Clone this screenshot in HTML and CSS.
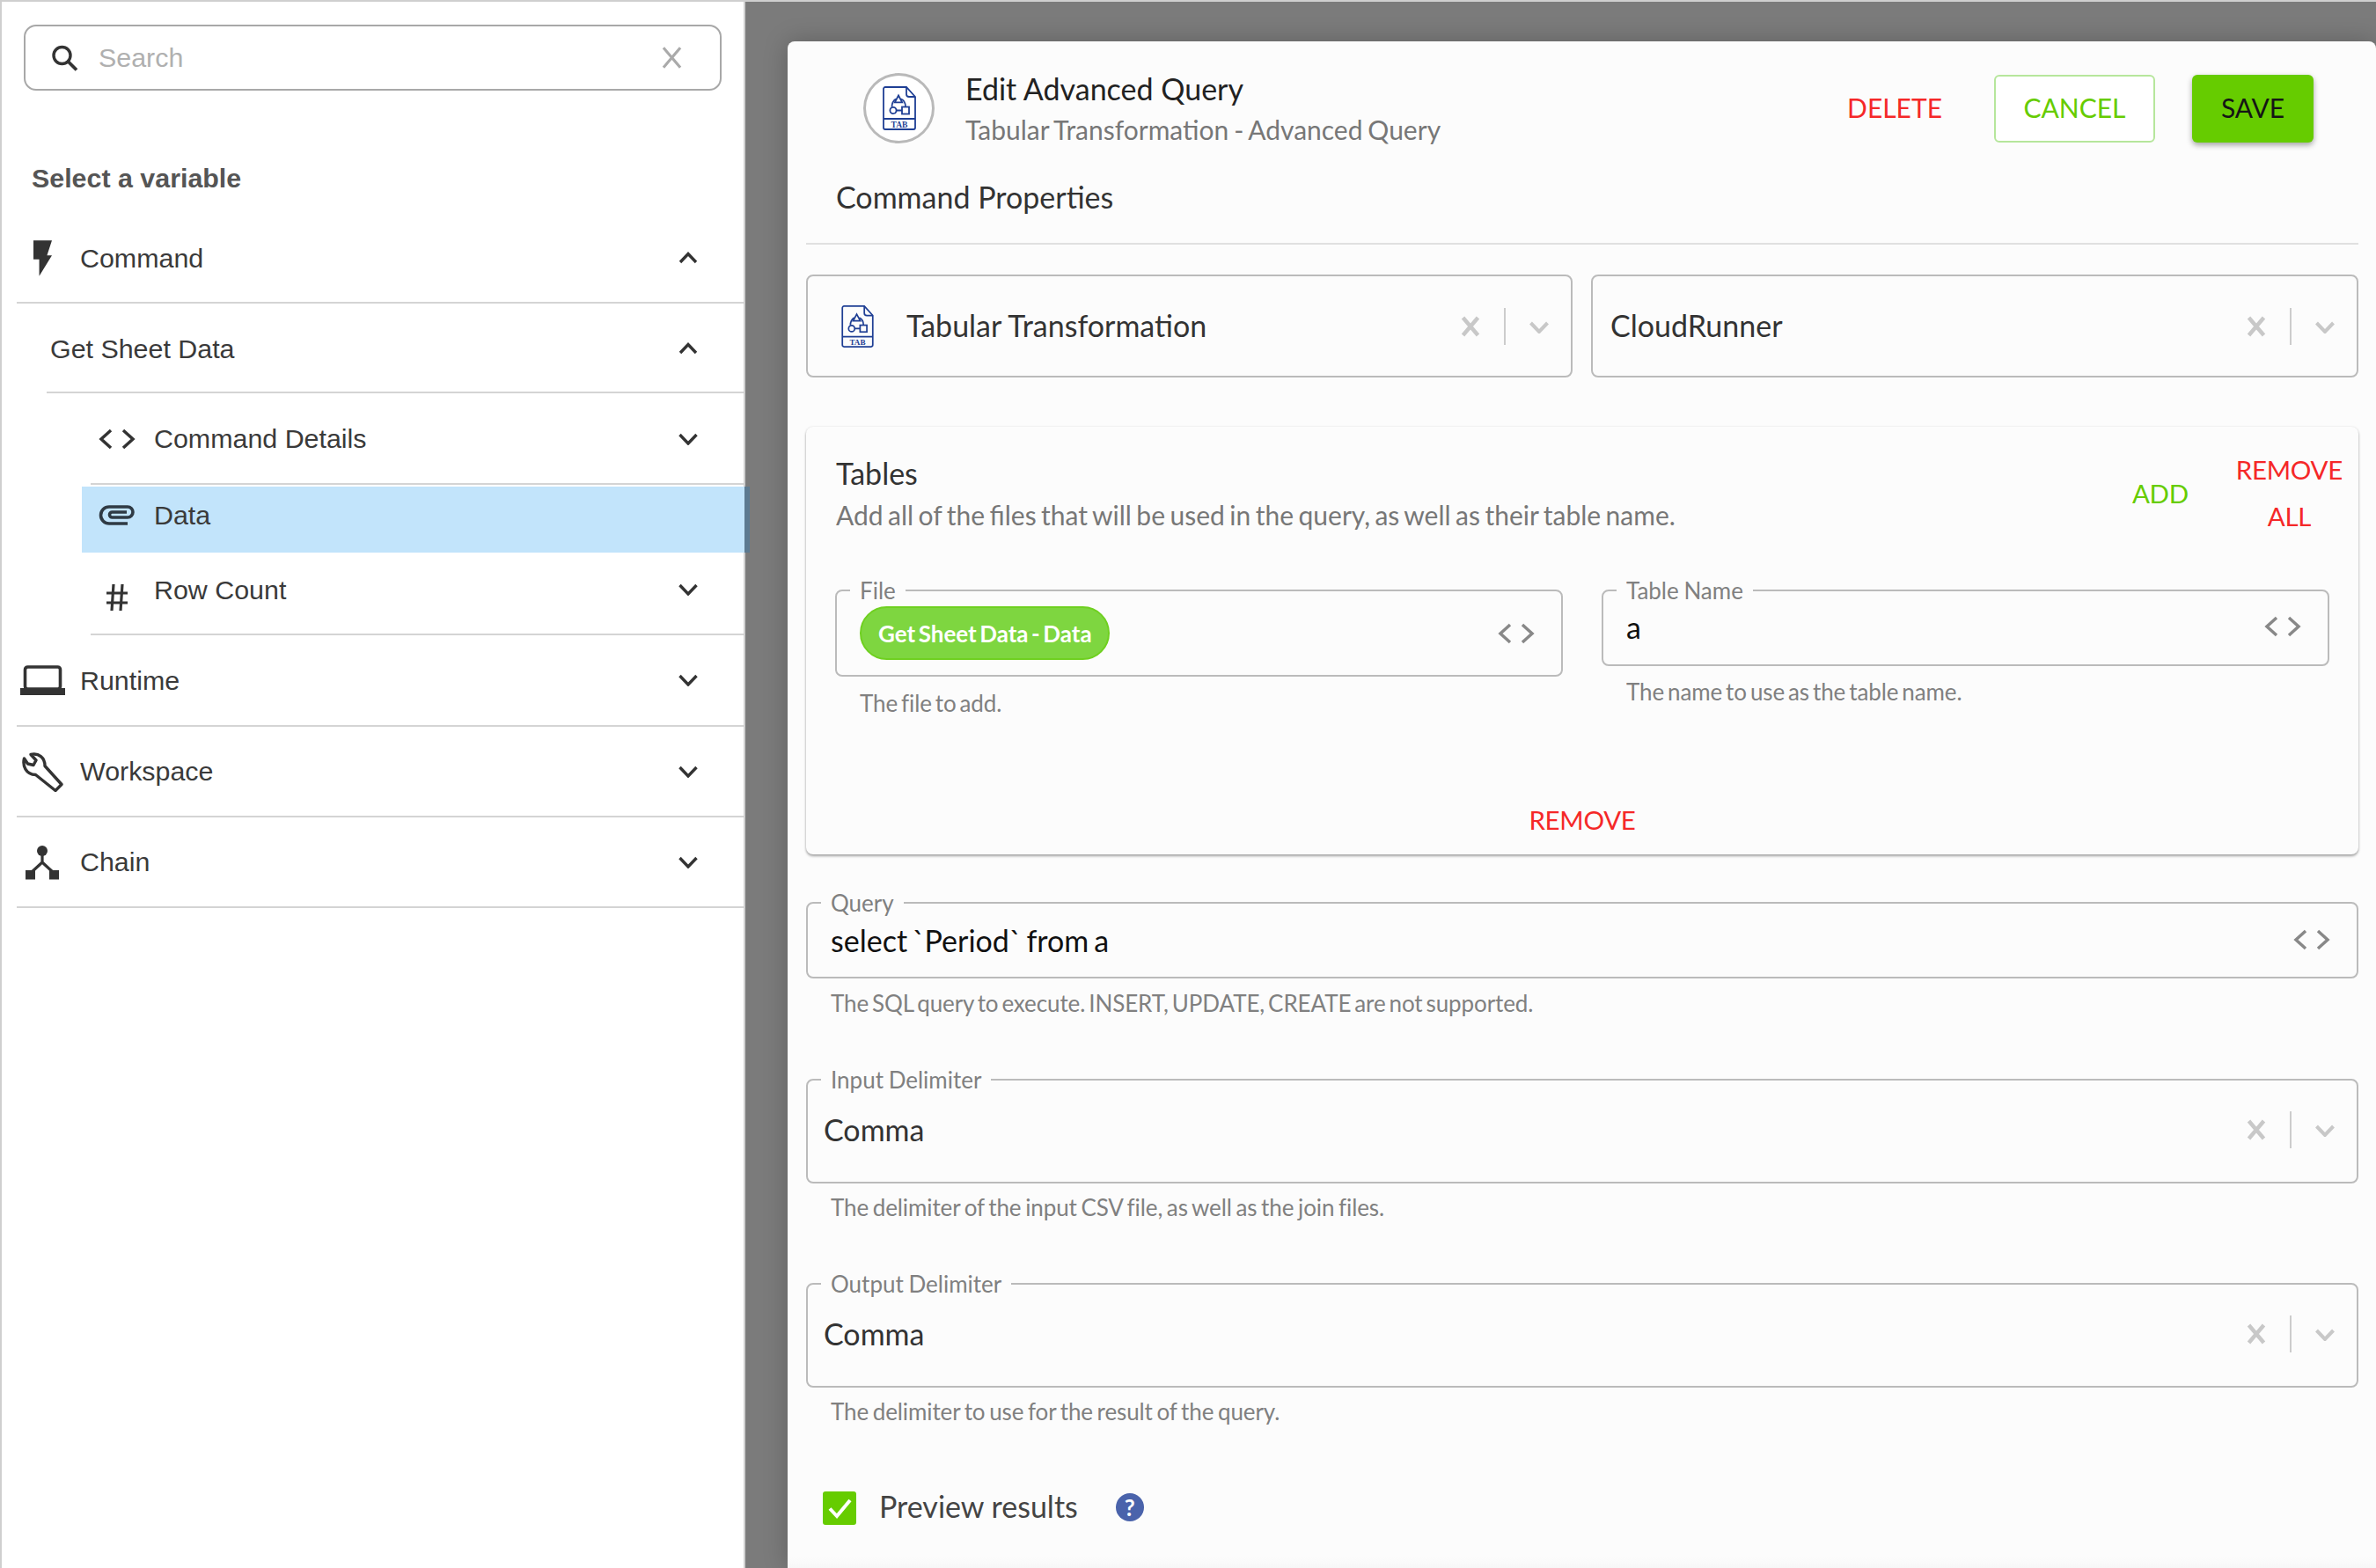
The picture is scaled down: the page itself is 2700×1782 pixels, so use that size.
FILE: index.html
```html
<!DOCTYPE html>
<html lang="en">
<head>
<meta charset="utf-8">
<title>Edit Advanced Query</title>
<link rel="stylesheet" href="styles.css">
</head>
<body>
<svg class="sprite" aria-hidden="true">
  <symbol id="i-code" viewBox="0 0 42 24"><path d="M14 2 3 12l11 10M28 2l11 10-11 10" fill="none" stroke="currentColor"/></symbol>
  <symbol id="i-down" viewBox="0 0 24 14"><path d="M2.500 2l9.500 10L21.500 2" fill="none" stroke="currentColor"/></symbol>
  <symbol id="i-up" viewBox="0 0 24 14"><path d="M3 12 12 2.500 21 12" fill="none" stroke="currentColor"/></symbol>
  <symbol id="i-x" viewBox="0 0 24 24"><path d="M3.500 2 20.500 22M20.500 2 3.500 22" fill="none" stroke="currentColor"/></symbol>
</svg>

<div class="page">
  <aside class="sidebar">
    <div class="search">
      <svg class="search-icon" viewBox="0 0 31 30"><circle cx="12.500" cy="12" r="9.500" fill="none" stroke="#333" stroke-width="3.400"/><path d="M19.500 19 29 28.500" stroke="#333" stroke-width="3.800"/></svg>
      <span class="search-text">Search</span>
      <svg class="search-clear"><use href="#i-x"/></svg>
    </div>
    <h2 class="heading">Select a variable</h2>

    <nav class="nav">
      <div class="row">
        <span class="slot"><svg class="ic-bolt" viewBox="0 0 64 124"><path d="M0 0H64L47 52H64L20 124V66H0z" fill="#333"/></svg></span>
        <span class="label">Command</span>
        <svg class="chev"><use href="#i-up"/></svg>
      </div>
      <div class="sub">
        <div class="row row-plain"><span class="label">Get Sheet Data</span><svg class="chev"><use href="#i-up"/></svg></div>
        <div class="subsub">
          <div class="row row-tall">
            <span class="slot slot-sub"><svg class="ic-code"><use href="#i-code"/></svg></span>
            <span class="label">Command Details</span>
            <svg class="chev"><use href="#i-down"/></svg>
          </div>
          <div class="row row-active">
            <span class="slot slot-sub"><svg class="ic-clip" viewBox="0 0 42 23"><path d="M33 21H12A9.500 9.500 0 0 1 12 2H33A6 6 0 0 1 33 14H15.500A3 3 0 0 1 15.500 8H32" fill="none" stroke="#2f3a44" stroke-width="3.600"/></svg></span>
            <span class="label">Data</span>
          </div>
          <div class="row row-count">
            <span class="slot slot-sub slot-low"><svg class="ic-hash" viewBox="0 0 26 32"><path d="M9 1 7 31M19 1l-2 30M1 11h24M1 22h24" fill="none" stroke="#333" stroke-width="3.200"/></svg></span>
            <span class="label">Row Count</span>
            <svg class="chev"><use href="#i-down"/></svg>
          </div>
        </div>
      </div>
      <div class="row row-mid">
        <span class="slot"><svg class="ic-laptop" viewBox="0 0 51 34"><rect x="5.500" y="2" width="40" height="25" rx="3" fill="none" stroke="#333" stroke-width="3.600"/><rect y="26" width="51" height="8" fill="#333"/></svg></span>
        <span class="label">Runtime</span>
        <svg class="chev"><use href="#i-down"/></svg>
      </div>
      <div class="row row-last">
        <span class="slot"><svg class="ic-wrench" viewBox="0 0 47 46"><path d="M10 3.500 16 10 13 15.500 6.500 14 2.500 8C.5 16 4 26 15.500 26.500L38 44.500 45 37.500 26 16.500C26 7 19 1.500 10 3.500z" fill="none" stroke="#333" stroke-width="3.400" stroke-linejoin="round"/></svg></span>
        <span class="label">Workspace</span>
        <svg class="chev"><use href="#i-down"/></svg>
      </div>
      <div class="row row-last">
        <span class="slot"><svg class="ic-chain" viewBox="0 0 38 40"><circle cx="19" cy="7" r="6" fill="#333"/><path d="M19 7V20L6 32M19 20 32 32" fill="none" stroke="#333" stroke-width="3.200"/><rect y="29" width="11" height="10.500" fill="#333"/><rect x="27" y="29" width="11" height="10.500" fill="#333"/></svg></span>
        <span class="label">Chain</span>
        <svg class="chev"><use href="#i-down"/></svg>
      </div>
    </nav>
  </aside>

  <main class="backdrop">
    <section class="modal">
      <header class="modal-head">
        <div class="circle">
          <svg class="ic-file-lg" viewBox="0 0 38 50">
            <g fill="none" stroke="#1f3f94" stroke-width="1.800">
              <path d="M27 1H3a2 2 0 0 0-2 2v44a2 2 0 0 0 2 2h32a2 2 0 0 0 2-2V12z"/>
              <path d="M27 1v8a3 3 0 0 0 3 3h7M1 37h36"/>
              <path d="M18 10.500l4.200 7.800h-8.400z"/>
              <circle cx="12" cy="27.500" r="3.600"/>
              <rect x="22" y="23.500" width="8" height="8"/>
              <path d="M15.600 27.500H22M10.500 23.500c0-4 1.500-7 4.500-9M21 14.500c3.500 1.500 5 4.500 5 9"/>
            </g>
            <text class="tab-text" x="19" y="46.500" text-anchor="middle">TAB</text>
          </svg>
        </div>
        <div class="titles">
          <h1 class="title">Edit Advanced Query</h1>
          <p class="subtitle">Tabular Transformation - Advanced Query</p>
        </div>
        <div class="actions">
          <span class="btn-delete">DELETE</span>
          <span class="btn-cancel">CANCEL</span>
          <span class="btn-save">SAVE</span>
        </div>
      </header>
      <h2 class="section-title">Command Properties</h2>

      <div class="select-pair">
        <div class="select">
          <svg class="ic-file-sm" viewBox="0 0 38 50">
            <g fill="none" stroke="#1f3f94" stroke-width="1.800">
              <path d="M27 1H3a2 2 0 0 0-2 2v44a2 2 0 0 0 2 2h32a2 2 0 0 0 2-2V12z"/>
              <path d="M27 1v8a3 3 0 0 0 3 3h7M1 37h36"/>
              <path d="M18 10.500l4.200 7.800h-8.400z"/>
              <circle cx="12" cy="27.500" r="3.600"/>
              <rect x="22" y="23.500" width="8" height="8"/>
              <path d="M15.600 27.500H22M10.500 23.500c0-4 1.500-7 4.500-9M21 14.500c3.500 1.500 5 4.500 5 9"/>
            </g>
            <text class="tab-text" x="19" y="46.500" text-anchor="middle">TAB</text>
          </svg>
          <span class="select-value">Tabular Transformation</span>
          <span class="controls"><svg class="ctl-x"><use href="#i-x"/></svg><i class="ctl-sep"></i><svg class="ctl-chev"><use href="#i-down"/></svg></span>
        </div>
        <div class="select select-second">
          <span class="select-value">CloudRunner</span>
          <span class="controls"><svg class="ctl-x"><use href="#i-x"/></svg><i class="ctl-sep"></i><svg class="ctl-chev"><use href="#i-down"/></svg></span>
        </div>
      </div>

      <section class="card">
        <div class="card-head">
          <div class="card-titles">
            <h3 class="card-title">Tables</h3>
            <p class="card-desc">Add all of the files that will be used in the query, as well as their table name.</p>
          </div>
          <span class="link-add">ADD</span>
          <span class="link-remove-all">REMOVE<br>ALL</span>
        </div>
        <div class="card-fields">
          <div>
            <fieldset class="field field-file">
              <legend>File</legend>
              <div class="field-inner inner-file">
                <span class="chip">Get Sheet Data - Data</span>
                <svg class="ic-field-code"><use href="#i-code"/></svg>
              </div>
            </fieldset>
            <p class="help help-tight">The file to add.</p>
          </div>
          <div>
            <fieldset class="field field-name">
              <legend>Table Name</legend>
              <div class="field-inner inner-name">
                <span class="value">a</span>
                <svg class="ic-field-code"><use href="#i-code"/></svg>
              </div>
            </fieldset>
            <p class="help help-tight help-name">The name to use as the table name.</p>
          </div>
        </div>
        <div class="card-foot"><span class="link-remove">REMOVE</span></div>
      </section>

      <fieldset class="field field-query">
        <legend>Query</legend>
        <div class="field-inner inner-query">
          <span class="value">select `Period` from a</span>
          <svg class="ic-field-code"><use href="#i-code"/></svg>
        </div>
      </fieldset>
      <p class="help help-tight help-query">The SQL query to execute. INSERT, UPDATE, CREATE are not supported.</p>

      <fieldset class="field field-delim">
        <legend>Input Delimiter</legend>
        <div class="field-inner inner-delim">
          <span class="select-value">Comma</span>
          <span class="controls"><svg class="ctl-x"><use href="#i-x"/></svg><i class="ctl-sep"></i><svg class="ctl-chev"><use href="#i-down"/></svg></span>
        </div>
      </fieldset>
      <p class="help help-delim">The delimiter of the input CSV file, as well as the join files.</p>

      <fieldset class="field field-delim">
        <legend>Output Delimiter</legend>
        <div class="field-inner inner-delim">
          <span class="select-value">Comma</span>
          <span class="controls"><svg class="ctl-x"><use href="#i-x"/></svg><i class="ctl-sep"></i><svg class="ctl-chev"><use href="#i-down"/></svg></span>
        </div>
      </fieldset>
      <p class="help help-delim">The delimiter to use for the result of the query.</p>

      <div class="preview">
        <span class="checkbox"><svg viewBox="0 0 38 38"><path d="M8 19.500 16 28 31 10" fill="none" stroke="#fff" stroke-width="4"/></svg></span>
        <span class="preview-label">Preview results</span>
        <span class="help-dot">?</span>
      </div>
    </section>
  </main>
</div>
</body>
</html>
```
FILE: styles.css
```css
* { box-sizing: border-box; }
html, body { margin: 0; height: 100%; overflow: hidden; }
body { background: #fff; font-family: "Lato", "Liberation Sans", sans-serif; }
h1, h2, h3, p { margin: 0; font-weight: 400; }
.sprite { width: 0; height: 0; overflow: hidden; display: block; }

.page { display: flex; height: 1782px; border-top: 2px solid #cfcfcf; }

/* Sidebar */
.sidebar {
  width: 847px; flex: none; position: relative; z-index: 1;
  background: #fff; border-left: 2px solid #cfcfcf; border-right: 2px solid #cfcfcf; padding-top: 26px;
  font-family: "Liberation Sans", Arial, sans-serif; color: #3a3a3a; font-size: 30.400px;
}
.search {
  display: flex; align-items: center; width: 793px; height: 75px; margin-left: 25px;
  padding: 0 41px 0 29px; border: 2px solid #a8a8a8; border-radius: 14px;
}
.search-icon { width: 31px; height: 30px; flex: none; }
.search-text { margin-left: 23px; flex: 1; color: #b0b0b0; }
.search-clear { width: 27px; height: 27px; color: #aaa; stroke-width: 2.800; }
.heading { margin: 79px 0 21px 34px; font-size: 30.400px; line-height: 40px; font-weight: 700; color: #555; }

.nav { margin-left: 17px; }
.row {
  display: flex; align-items: center; height: 102px; padding-right: 51px;
  border-bottom: 2px solid #d4d4d4;
}
.row-mid { height: 104px; }
.row-last { height: 103px; }
.row-tall { height: 104px; padding-top: 1px; }
.label { flex: 1; line-height: 40px; padding-bottom: 1px; }
.slot { width: 58px; margin-right: 14px; flex: none; display: flex; justify-content: center; align-items: center; }
.slot-sub { width: 60px; margin-right: 12px; }
.chev { width: 24px; height: 14px; flex: none; color: #333; stroke-width: 3.400; }
.sub { margin-left: 34px; }
.row-plain { padding-left: 4px; padding-top: 2px; }
.subsub { margin-left: 50px; }
.row-active {
  height: 75px; margin: 2px -7px 0 -10px; padding-left: 10px; padding-bottom: 10px;
  background: linear-gradient(to right, #c2e4fb calc(100% - 6px), #5d7a90 0);
  border-bottom: 0;
}
.row-count { height: 94px; padding-bottom: 8px; }
.slot-low { margin-top: 18px; }

.ic-bolt { width: 21px; height: 41px; }
.ic-code { width: 42px; height: 24px; color: #333; stroke-width: 3.500; }
.ic-clip { width: 42px; height: 23px; }
.ic-hash { width: 26px; height: 32px; }
.ic-laptop { width: 51px; height: 34px; }
.ic-wrench { width: 47px; height: 46px; }
.ic-chain { width: 38px; height: 40px; }

/* Dimmed area */
.backdrop {
  flex: 1; min-width: 0; background: #7b7b7b; padding: 45px 0 0 48px;
}
.modal {
  height: 100%; border-radius: 8px 8px 0 0;
  background: linear-gradient(#fcfcfc calc(100% - 12px), #f7f7f7);
  padding: 36px 20px 0 21px; box-shadow: 0 0 28px rgba(0, 0, 0, .22); color: #333;
}
.modal-head { display: flex; height: 80px; padding: 0 51px 0 65px; }
.circle {
  width: 81px; height: 80px; flex: none; display: flex; align-items: center; justify-content: center;
  background: #fff; border: 3px solid #b9b9b9; border-radius: 50%;
}
.ic-file-lg { width: 38px; height: 50px; }
.tab-text { font: 700 9.500px "Liberation Serif", serif; fill: #1f3f94; }
.titles { margin-left: 35px; flex: 1; }
.title { font-size: 34px; line-height: 40px; color: #222; margin-top: -2px; }
.subtitle { font-size: 30px; line-height: 40px; margin-top: 6px; color: #777; word-spacing: -1.800px; }
.actions { display: flex; align-items: center; font-size: 30px; }
.btn-delete { color: #f52828; margin-right: 59px; padding-bottom: 2px; }
.btn-cancel {
  width: 183px; height: 77px; display: flex; align-items: center; justify-content: center;
  color: #66cc00; border: 2px solid #b6e69c; border-radius: 6px; margin-right: 42px; background: #fff; padding-bottom: 2px;
}
.btn-save {
  width: 138px; height: 77px; display: flex; align-items: center; justify-content: center; padding-bottom: 2px;
  color: #151515; background: #66cc00; border-radius: 6px; box-shadow: 0 3px 6px rgba(0, 0, 0, .35);
}
.section-title {
  margin-top: 37px; padding: 2px 0 0 34px; height: 78px; line-height: 44px;
  font-size: 34px; color: #333; border-bottom: 2px solid #e0e0e0;
}

.select-pair { display: grid; grid-template-columns: 871px 872px; gap: 21px; margin-top: 34px; }
.select {
  display: flex; align-items: center; height: 117px; padding-left: 38px;
  border: 2px solid #bbb; border-radius: 8px;
}
.select-second { padding-left: 20px; }
.ic-file-sm { width: 37px; height: 48px; margin-right: 37px; flex: none; }
.select-value { flex: 1; font-size: 34px; color: #333; }
.select .select-value { padding-bottom: 2px; }
.controls { display: flex; align-items: center; flex: none; padding-right: 24px; }
.ctl-x { width: 24px; height: 24px; color: #c8c8c8; stroke-width: 4.500; }
.ctl-sep { width: 2px; height: 42px; background: #ccc; margin: 0 26px; }
.ctl-chev { width: 24px; height: 14px; margin-top: 2px; color: #c8c8c8; stroke-width: 4; }

/* Tables card */
.card {
  margin-top: 56px; height: 486px; background: #fcfcfc; border-radius: 8px;
  box-shadow: 0 2px 3px rgba(0, 0, 0, .35), 0 0 3px rgba(0, 0, 0, .08);
}
.card-head { display: flex; align-items: center; padding: 22px 18px 0 34px; }
.card-titles { flex: 1; padding-top: 11px; align-self: flex-start; }
.card-title { font-size: 34px; line-height: 40px; color: #333; }
.card-desc { font-size: 30px; line-height: 40px; margin-top: 7px; color: #777; word-spacing: -2.200px; }
.link-add { color: #66cc00; font-size: 29.500px; letter-spacing: -.3px; margin-right: 54px; }
.link-remove-all { color: #f52828; font-size: 29.500px; letter-spacing: -.3px; line-height: 53px; text-align: center; }
.card-fields { display: grid; grid-template-columns: 827px 827px; gap: 44px; padding: 0 33px; margin-top: 43px; }
.card-foot { margin-top: 96px; text-align: center; line-height: 40px; }
.link-remove { color: #f52828; font-size: 29.500px; letter-spacing: -.3px; }

/* Outlined fields */
.field { margin: 0; padding: 0; min-width: 0; border: 2px solid #bbb; border-radius: 8px; }
.field legend {
  margin-left: 15px; padding: 0 11px; font-size: 26px; line-height: 30px; color: #808080; word-spacing: -1px;
}
.field-file { height: 113px; }
.field-name { height: 101px; }
.field-inner { display: flex; align-items: center; justify-content: space-between; padding: 0 30px 0 26px; }
.inner-file { height: 67px; }
.inner-name { height: 52px; }
.ic-field-code { width: 42px; height: 24px; color: #888; flex: none; stroke-width: 3.500; }
.chip {
  display: flex; align-items: center; height: 61px; padding: 0 18px 0 19px;
  background: #7ed640; border: 2px solid #6fd020; border-radius: 31px;
  color: #fff; font-size: 26px; font-weight: 700; word-spacing: -2.800px;
}
.value { font-size: 34px; color: #111; word-spacing: -2.800px; }
.help { font-size: 26px; line-height: 34px; margin: 13px 0 0 28px; color: #808080; word-spacing: -1.900px; letter-spacing: -.1px; }
.help-tight { word-spacing: -2.600px; }
.help-name { margin-top: 12px; }
.help-query { margin-top: 11px; }
.help-delim { margin-top: 10px; }

.field-query { margin-top: 40px; height: 101px; }
.inner-query { height: 54px; }
.field-delim { margin-top: 55px; height: 133px; }
.inner-delim { height: 83px; padding: 0 0 0 18px; }

.preview { display: flex; align-items: center; margin-top: 74px; padding-left: 19px; height: 38px; }
.checkbox { width: 38px; height: 38px; background: #66cc00; border-radius: 3px; display: block; }
.checkbox svg { width: 38px; height: 38px; display: block; }
.preview-label { margin: 0 0 6px 26px; font-size: 34px; color: #444; }
.help-dot {
  width: 32px; height: 32px; margin: 0 0 3px 43px; border-radius: 50%;
  display: flex; align-items: center; justify-content: center;
  background: #4a63ab; color: #fff; font-size: 26px; font-weight: 700; line-height: 1;
}
```
